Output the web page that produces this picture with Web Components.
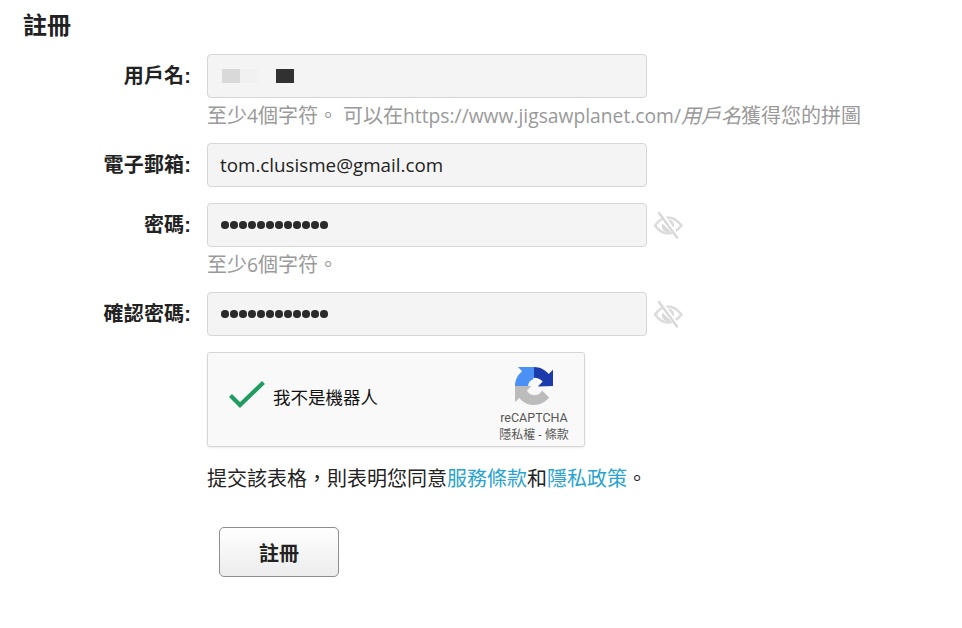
<!DOCTYPE html>
<html lang="zh-Hant"><head><meta charset="utf-8">
<style>
html,body{margin:0;padding:0;background:#fff}
body{font-family:"Liberation Sans","Noto Sans CJK TC",sans-serif;color:#222}
</style></head><body>
<register-page></register-page>
<template id="field-t">
<style>
:host{display:grid;grid-template-columns:191px 440px 1fr;column-gap:16px;align-items:start}
.l{font-size:20px;font-weight:700;text-align:right;line-height:44px;height:44px;color:#222;white-space:nowrap;margin-left:-40px;letter-spacing:.15px}
.box{box-sizing:border-box;width:440px;height:44px;background:#f4f4f4;border:1px solid #d6d6d6;border-radius:4px;padding:0 12px;display:flex;align-items:center;font-size:18.800px;color:#222;font-family:"Open Sans","Noto Sans CJK TC",sans-serif}
.eye{display:flex;align-items:center;height:44px;margin-left:-10px}
.hint{grid-column:2/4;font-size:20px;line-height:22px;color:#999;white-space:nowrap;font-family:"Open Sans","Noto Sans CJK TC",sans-serif}
::slotted([slot=hint]){display:block;margin-top:7px}
</style>
<div class="l"><slot name="label"></slot></div>
<div class="box"><slot></slot></div>
<div class="eye"><slot name="eye"></slot></div>
<div class="hint"><slot name="hint"></slot></div>
</template>
<script>
const eyeSvg=`<svg width="30" height="30" viewBox="0 0 30 30" fill="none" style="display:block"><path d="M2 15.500C6 10 10 7.500 15 7.500S24 10 28.500 15.500C24 21 20 23.500 15 23.500S6 21 2 15.500Z" stroke="#dcdcdc" stroke-width="2.600" stroke-linejoin="round"/><path d="M15 9.500a6 6 0 0 1 5.500 8.500L12 10.500A6 6 0 0 1 15 9.500ZM9.500 13.500l8 8a6 6 0 0 1-8-8Z" fill="#d8d8d8"/><path d="M7.500 3L24.500 27" stroke="#fff" stroke-width="4.500"/><path d="M6 3L24 27.500" stroke="#d8d8d8" stroke-width="2.400" stroke-linecap="round"/></svg>`;
class FormField extends HTMLElement{
  constructor(){super();const s=this.attachShadow({mode:'open'});s.append(document.getElementById('field-t').content.cloneNode(true));}
}
customElements.define('form-field',FormField);
class PwDots extends HTMLElement{
  constructor(){super();const s=this.attachShadow({mode:'open'});
  s.innerHTML=`<style>:host{display:inline-flex;gap:1.500px;margin-left:1px}i{display:block;width:7.500px;height:7.500px;border-radius:50%;background:#2b2b2b}</style>`+'<i></i>'.repeat(12);}
}
customElements.define('pw-dots',PwDots);
class EyeOff extends HTMLElement{
  constructor(){super();const s=this.attachShadow({mode:'open'});s.innerHTML=`<style>:host{display:block}</style>`+eyeSvg;}
}
customElements.define('eye-off',EyeOff);
class CaptchaBox extends HTMLElement{
  constructor(){super();const s=this.attachShadow({mode:'open'});
  s.innerHTML=`<style>
  :host{display:block;box-sizing:border-box;width:378px;height:95px;background:#f9f9f9;border:1px solid #d6d6d6;border-radius:3px;box-shadow:0 1px 2px rgba(0,0,0,.08);font-family:Roboto,"Noto Sans CJK TC",sans-serif}
  .w{display:flex;height:100%;align-items:flex-start}
  .c{margin:27px 0 0 20px;display:block}
  .t{font-size:17.500px;line-height:20px;margin:35px 0 0 7px;color:#111;white-space:nowrap}
  .r{margin-left:auto;width:98px;margin-right:1px;padding-top:14px;display:flex;flex-direction:column;align-items:center;text-align:center;color:#555}
  .n{font-size:12.500px;line-height:15px;margin-top:5px;white-space:nowrap}
  .p{font-size:12px;line-height:14px;margin-top:3px;white-space:nowrap}
  </style><div class="w">
  <svg class="c" width="38" height="30" viewBox="0 0 38 30"><path d="M2.500 15.500L12 25 35.500 2.500" fill="none" stroke="#1f9d60" stroke-width="4.200"/></svg>
  <div class="t">我不是機器人</div>
  <div class="r">
  <svg width="38" height="38" viewBox="0 0 64 64" style="display:block">
    <path d="M32 0H5L12 7.200C4.700 13 0 22 0 32H22C22 27 25 23 30 21L36 10Z" fill="#4a90f5"/>
    <path d="M64 32V4.700L56.800 11.900C51 4.700 42 0 32 0V18C38 18 43.500 20 46.700 24.500L38.400 32.800C47 32.500 56 32.200 64 32Z" fill="#1c3aa9"/>
    <path d="M0 32V59.300L7.200 52.100C13 59.300 22 64 32 64C42.400 64 51.600 59 57.400 51.400L45.700 39.600C44.500 41.600 43 43.300 41.200 44.600C39 46.200 36.200 47.500 32.200 47.500C26 47.500 22 44 20 39.700L27.700 32Z" fill="#bcbcbc"/>
  </svg>
  <div class="n">reCAPTCHA</div><div class="p">隱私權 - 條款</div></div></div>`;}
}
customElements.define('captcha-box',CaptchaBox);
class SubmitBtn extends HTMLElement{
  constructor(){super();const s=this.attachShadow({mode:'open'});
  s.innerHTML=`<style>:host{display:flex;align-items:center;justify-content:center;box-sizing:border-box;width:120px;height:50px;border:1px solid #8e8e8e;border-radius:5px;background:linear-gradient(#fff,#ececec);font-size:20px;font-weight:700;color:#222}</style><slot></slot>`;}
}
customElements.define('submit-btn',SubmitBtn);
class RegisterPage extends HTMLElement{
  constructor(){super();const s=this.attachShadow({mode:'open'});
  s.innerHTML=`<style>
  :host{display:block;width:962px;height:628px;box-sizing:border-box;padding-top:12px;font-family:"Liberation Sans","Noto Sans CJK TC",sans-serif;overflow:hidden}
  h1{margin:0 0 0 23px;font-size:24px;line-height:28px;font-weight:700;color:#222}
  .form{margin-top:14px;display:flex;flex-direction:column}
  .m1{margin-top:16px}.m2{margin-top:16px}.m3{margin-top:16px}
  .block{margin-left:207px}
  .terms{font-size:20px;line-height:24px;margin-top:20px;color:#222;white-space:nowrap;font-family:"Open Sans","Noto Sans CJK TC",sans-serif}
  a{color:#29a3d0;text-decoration:none}
  .btn{margin:36px 0 0 219px}
  .lat{font-size:19.250px}
  .blur{display:inline-flex;align-items:center}
  .a{width:18px;height:14px;background:#d9d9d9}.b{width:18px;height:14px;background:#f1f1f1}.d{width:18px;height:14px;background:#313131;margin-left:18px}
  </style>
  <h1>註冊</h1>
  <div class="form">
  <form-field><span slot="label">用戶名:</span><span class="blur" style="margin-left:2px"><span class="a"></span><span class="b"></span><span class="d"></span></span><span slot="hint">至少<span class="lat">4</span>個字符。<span class="lat"> </span>可以在<span class="lat">https://www.jigsawplanet.com/</span><i>用戶名</i>獲得您的拼圖</span></form-field>
  <form-field class="m1"><span slot="label">電子郵箱:</span>tom.clusisme@gmail.com</form-field>
  <form-field class="m2"><span slot="label">密碼:</span><pw-dots></pw-dots><eye-off slot="eye"></eye-off><span slot="hint">至少<span class="lat">6</span>個字符。</span></form-field>
  <form-field class="m3"><span slot="label">確認密碼:</span><pw-dots></pw-dots><eye-off slot="eye"></eye-off></form-field>
  </div>
  <captcha-box class="block" style="margin-top:16px"></captcha-box>
  <div class="block terms">提交該表格，則表明您同意<a href="#">服務條款</a>和<a href="#">隱私政策</a>。</div>
  <submit-btn class="btn">註冊</submit-btn>`;}
}
customElements.define('register-page',RegisterPage);
</script>
</body></html>
